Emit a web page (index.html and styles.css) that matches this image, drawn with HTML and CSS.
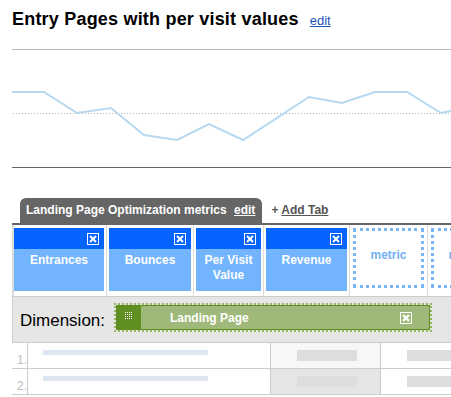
FILE: index.html
```html
<!DOCTYPE html>
<html lang="en">
<head>
    <meta charset="UTF-8">
    <title>Entry Pages with per visit values</title>
    <link rel="stylesheet" href="styles.css">
</head>
<body>
    <div class="page">
        <div class="title-row">
            <h1>Entry Pages with per visit values</h1>
            <a href="#" class="edit-link">edit</a>
        </div>

        <div class="chart">
            <svg width="439" height="118" viewBox="0 0 439 118">
                <line x1="1" y1="63.5" x2="439" y2="63.5" stroke="#b5b5b5" stroke-width="1" stroke-dasharray="1 2"/>
                <polyline fill="none" stroke="#b6d8f0" stroke-width="2"
                    points="0,42 32,42 65,63 99,58 132,85 165,90 197,74 231,90 297,47 330,53 363,42 395,42 429,63 439,61"/>
                <line x1="0" y1="117.5" x2="439" y2="117.5" stroke="#666" stroke-width="1"/>
            </svg>
        </div>

        <div class="tabs">
            <div class="tab">Landing Page Optimization metrics <a href="#" class="tab-edit">edit</a></div>
            <a href="#" class="add-tab">+ <span>Add Tab</span></a>
        </div>

        <div class="metrics">
            <div class="cell first">
                <div class="metric">
                    <div class="metric-head"><svg class="close" width="12" height="12" viewBox="0 0 12 12"><rect x="0.5" y="0.5" width="11" height="11" fill="none" stroke="#fff"/><path d="M3 3 L9 9 M9 3 L3 9" stroke="#fff" stroke-width="2"/></svg></div>
                    <div class="metric-body">Entrances</div>
                </div>
            </div>
            <div class="cell">
                <div class="metric w82">
                    <div class="metric-head"><svg class="close" width="12" height="12" viewBox="0 0 12 12"><rect x="0.5" y="0.5" width="11" height="11" fill="none" stroke="#fff"/><path d="M3 3 L9 9 M9 3 L3 9" stroke="#fff" stroke-width="2"/></svg></div>
                    <div class="metric-body">Bounces</div>
                </div>
            </div>
            <div class="cell">
                <div class="metric w65">
                    <div class="metric-head"><svg class="close" width="12" height="12" viewBox="0 0 12 12"><rect x="0.5" y="0.5" width="11" height="11" fill="none" stroke="#fff"/><path d="M3 3 L9 9 M9 3 L3 9" stroke="#fff" stroke-width="2"/></svg></div>
                    <div class="metric-body">Per Visit Value</div>
                </div>
            </div>
            <div class="cell">
                <div class="metric w81">
                    <div class="metric-head"><svg class="close" width="12" height="12" viewBox="0 0 12 12"><rect x="0.5" y="0.5" width="11" height="11" fill="none" stroke="#fff"/><path d="M3 3 L9 9 M9 3 L3 9" stroke="#fff" stroke-width="2"/></svg></div>
                    <div class="metric-body">Revenue</div>
                </div>
            </div>
            <div class="cell empty">
                <div class="placeholder">metric</div>
            </div>
            <div class="cell empty">
                <div class="placeholder">metric</div>
            </div>
        </div>

        <div class="dimension">
            <span class="dim-label">Dimension:</span>
            <div class="pill">
                <div class="pill-inner">
                    <div class="handle">
                        <svg width="8" height="8" viewBox="0 0 8 8">
                            <defs>
                                <pattern id="dots" width="2" height="2" patternUnits="userSpaceOnUse">
                                    <rect width="1" height="1" fill="#fff"/>
                                </pattern>
                            </defs>
                            <rect width="8" height="8" fill="url(#dots)"/>
                        </svg>
                    </div>
                    <div class="pill-text">Landing Page</div>
                    <svg class="pill-close" width="12" height="12" viewBox="0 0 12 12"><rect x="0.5" y="0.5" width="11" height="11" fill="none" stroke="#fff"/><path d="M3 3 L9 9 M9 3 L3 9" stroke="#fff" stroke-width="2.4"/></svg>
                </div>
            </div>
        </div>

        <div class="rows">
            <div class="row">
                <div class="num">1.</div>
                <div class="col name"><span class="bar-blue"></span></div>
                <div class="col val light"><span class="bar-gray"></span></div>
                <div class="col val"><span class="bar-gray"></span></div>
            </div>
            <div class="row">
                <div class="num">2.</div>
                <div class="col name"><span class="bar-blue"></span></div>
                <div class="col val dark"><span class="bar-gray"></span></div>
                <div class="col val"><span class="bar-gray"></span></div>
            </div>
        </div>
    </div>
</body>
</html>
```

FILE: styles.css
```css
* {
    box-sizing: border-box;
}

body {
    margin: 0;
    overflow: hidden;
    background-color: #fff;
    font-family: "Liberation Sans", Arial, sans-serif;
}

.page {
    padding-left: 12px;
    width: 520px;
}

.title-row {
    display: flex;
    align-items: baseline;
    gap: 11px;
    height: 50px;
    padding-top: 8px;
    border-bottom: 1px solid #bbb;
    width: 439px;
}

h1 {
    margin: 0;
    font-size: 18px;
    line-height: 22px;
    font-weight: bold;
    letter-spacing: 0.2px;
    color: #000;
}

.edit-link {
    font-size: 13px;
    color: #1b55b5;
}

.chart {
    height: 118px;
}

.chart svg {
    display: block;
}

.tabs {
    display: flex;
    align-items: flex-end;
    margin-top: 30px;
    border-bottom: 2px solid #666;
    width: 439px;
}

.tab {
    margin-left: 8px;
    height: 25px;
    line-height: 25px;
    padding: 0 7px 0 6px;
    background-color: #666;
    border-radius: 6px 6px 0 0;
    color: #fff;
    font-size: 12px;
    font-weight: bold;
    white-space: nowrap;
}

.tab-edit {
    color: #fff;
    margin-left: 4px;
}

.add-tab {
    margin-left: 9px;
    line-height: 25px;
    font-size: 12px;
    font-weight: bold;
    color: #555;
    text-decoration: none;
}

.add-tab span {
    text-decoration: underline;
}

.metrics {
    display: flex;
    height: 71px;
}

.cell {
    flex-shrink: 0;
    border-left: 1px solid #dcdcdc;
    padding: 3px 2px 0 2px;
}

.cell.first {
    border-left: 2px solid #dcdcdc;
    padding-left: 0;
}

.metric {
    width: 90px;
    height: 63px;
    display: flex;
    flex-direction: column;
}

.w82 { width: 82px; }
.w65 { width: 65px; }
.w81 { width: 81px; }

.metric-head {
    height: 21px;
    background-color: #0664fe;
    display: flex;
    justify-content: flex-end;
    align-items: center;
    padding-right: 5px;
}

.close {
    display: block;
}

.metric-body {
    flex: 1;
    background-color: #72b4fd;
    color: #fff;
    font-size: 12px;
    font-weight: bold;
    text-align: center;
    line-height: 15px;
    padding-top: 4px;
}

.cell.empty {
    padding: 3px 3px 0 3px;
}

.placeholder {
    width: 71px;
    height: 60px;
    border: 3px dotted #78b5f9;
    display: flex;
    justify-content: center;
    align-items: center;
    padding-bottom: 6px;
    color: #74b2f6;
    font-size: 12px;
    font-weight: bold;
}

.dimension {
    display: flex;
    align-items: flex-start;
    height: 47px;
    padding: 6px 0 0 7px;
    background-color: #e6e6e6;
    border-top: 1px solid #ccc;
    border-bottom: 1px solid #ccc;
    border-left: 1px solid #ccc;
    width: 439px;
}

.dim-label {
    font-size: 17px;
    line-height: 20px;
    margin-top: 8px;
    color: #000;
    width: 94px;
}

.pill {
    width: 318px;
    height: 29px;
    border: 2px dotted #95b860;
    background-color: #e6e6e6;
}

.pill-inner {
    display: flex;
    align-items: center;
    height: 100%;
    border: 1px solid #5e8f20;
    background-color: #9fb97b;
}

.handle {
    width: 24px;
    height: 100%;
    background-color: #5e8f20;
    display: flex;
    align-items: center;
    justify-content: center;
    padding-bottom: 3px;
}

.handle svg {
    display: block;
}

.pill-text {
    flex: 1;
    padding-left: 29px;
    color: #fff;
    font-size: 12px;
    font-weight: bold;
}

.pill-close {
    display: block;
    margin-right: 17px;
}

.rows {
    width: 439px;
    overflow: hidden;
}

.row {
    display: flex;
    height: 26px;
    border-bottom: 1px solid #ccc;
}

.num {
    flex-shrink: 0;
    width: 16px;
    border-right: 1px solid #ccc;
    color: #bbb;
    font-size: 12px;
    text-align: right;
    padding-top: 10px;
    overflow: hidden;
    white-space: nowrap;
    text-indent: -2px;
}

.col {
    flex-shrink: 0;
    border-right: 1px solid #ccc;
}

.name {
    width: 243px;
    padding: 7px 0 0 15px;
}

.val {
    width: 110px;
    padding: 7px 0 0 26px;
}

.val.light {
    background-color: #f7f7f7;
}

.val.dark {
    background-color: #e5e5e5;
}

.bar-blue {
    display: block;
    width: 165px;
    height: 5px;
    background-color: #dfe6f3;
}

.bar-gray {
    display: block;
    width: 60px;
    height: 11px;
    background-color: #dddddd;
}
```
